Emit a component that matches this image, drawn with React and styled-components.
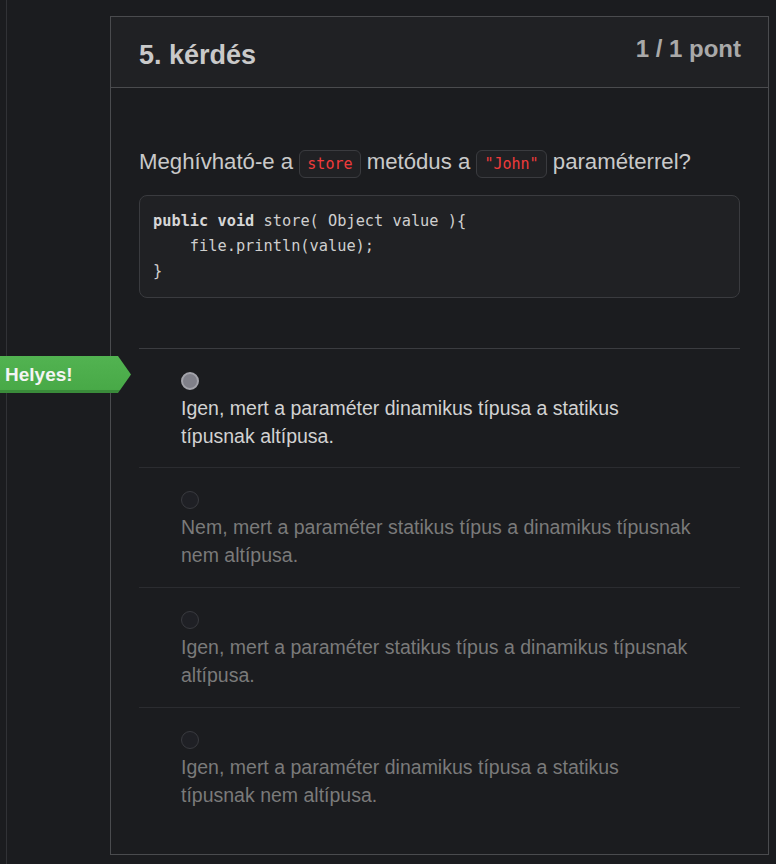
import React from "react";
import styled, { createGlobalStyle } from "styled-components";

const colors = {
  page: "#1b1c1f",
  header: "#202124",
  cardBorder: "#4a4b4e",
  divider: "#3b3c40",
  rowLine: "#2b2c30",
  text: "#c9c9c9",
  muted: "#7a7a7a",
  red: "#ef3b3b",
  green: "#4fb04e",
};

const GlobalStyle = createGlobalStyle`
  html, body {
    margin: 0;
    padding: 0;
    background: ${colors.page};
    font-family: "Liberation Sans", Arial, sans-serif;
  }
`;

const Page = styled.div`
  display: flex;
  min-height: 100vh;
`;

const Rail = styled.div`
  width: 6px;
  flex-shrink: 0;
  border-right: 1px solid #313236;
`;

const Main = styled.main`
  flex: 1;
  padding: 16px 7px 9px 103px;
`;

const Card = styled.section`
  border: 1px solid ${colors.cardBorder};
  background: ${colors.page};
`;

const Header = styled.header`
  display: flex;
  justify-content: space-between;
  align-items: flex-start;
  height: 70px;
  padding: 0 27px 0 28px;
  background: ${colors.header};
  border-bottom: 1px solid ${colors.cardBorder};
`;

const Title = styled.h2`
  margin: 23px 0 0;
  font-size: 27px;
  font-weight: 700;
  color: ${colors.text};
`;

const Points = styled.div`
  margin-top: 18px;
  font-size: 24px;
  font-weight: 700;
  color: #a9a9a9;
`;

const Body = styled.div`
  padding: 57px 28px 27px;
`;

const Question = styled.p`
  margin: 0;
  font-size: 22.2px;
  line-height: 33px;
  color: ${colors.text};
`;

const Chip = styled.code`
  font-family: "DejaVu Sans Mono", "Liberation Mono", monospace;
  font-size: 15px;
  line-height: 17px;
  padding: 4px 7px;
  color: ${colors.red};
  background: #202124;
  border: 1px solid #3a3b3f;
  border-radius: 6px;
`;

const CodeBlock = styled.pre`
  margin: 17px 0 0;
  padding: 13px;
  background: #202124;
  border: 1px solid #3a3b3f;
  border-radius: 8px;
  font-family: "DejaVu Sans Mono", "Liberation Mono", monospace;
  font-size: 15.3px;
  line-height: 25px;
  color: #cfcfcf;
`;

const Keyword = styled.b`
  font-weight: 700;
  color: #d6d6d6;
`;

const OptionList = styled.ul`
  list-style: none;
  margin: 50px 0 0;
  padding: 0;
  border-top: 1px solid ${colors.divider};
`;

const Option = styled.li`
  position: relative;
  padding: 23px 46px 18px 42px;
  &:first-child {
    padding-bottom: 17px;
  }
  & + & {
    border-top: 1px solid ${colors.rowLine};
  }
`;

const Radio = styled.span`
  display: block;
  box-sizing: border-box;
  width: 18px;
  height: 18px;
  border-radius: 50%;
  margin-bottom: 4px;
  background: ${({ $checked }) => ($checked ? "#808089" : "#1f2025")};
  border: ${({ $checked }) =>
    $checked ? "2px solid #a3a3aa" : "1px solid #393a3f"};
`;

const OptionText = styled.div`
  font-size: 19.5px;
  line-height: 28px;
  color: ${({ $checked }) => ($checked ? "#d2d2d2" : colors.muted)};
`;

const Badge = styled.div`
  position: absolute;
  top: 7px;
  left: -139px;
  width: 131px;
  height: 37px;
  box-sizing: border-box;
  padding-left: 5px;
  display: flex;
  align-items: center;
  font-size: 19px;
  font-weight: 700;
  color: #f4f4f4;
  background: linear-gradient(
    to bottom,
    #52b351 0,
    #48a947 calc(100% - 3px),
    #3a8b3a calc(100% - 3px)
  );
  clip-path: polygon(0 0, calc(100% - 13px) 0, 100% 50%, calc(100% - 13px) 100%, 0 100%);
`;

const options = [
  {
    text: "Igen, mert a paraméter dinamikus típusa a statikus típusnak altípusa.",
    checked: true,
    correct: true,
  },
  {
    text: "Nem, mert a paraméter statikus típus a dinamikus típusnak nem altípusa.",
  },
  {
    text: "Igen, mert a paraméter statikus típus a dinamikus típusnak altípusa.",
  },
  {
    text: "Igen, mert a paraméter dinamikus típusa a statikus típusnak nem altípusa.",
  },
];

export default function App() {
  return (
    <Page>
      <GlobalStyle />
      <Rail />
      <Main>
        <Card>
          <Header>
            <Title>5. kérdés</Title>
            <Points>1 / 1 pont</Points>
          </Header>
          <Body>
            <Question>
              Meghívható-e a <Chip>store</Chip> metódus a{" "}
              <Chip>"John"</Chip> paraméterrel?
            </Question>
            <CodeBlock>
              <Keyword>public</Keyword> <Keyword>void</Keyword> store( Object value ){"{"}
              {"\n"}    file.println(value);
              {"\n"}
              {"}"}
            </CodeBlock>
            <OptionList>
              {options.map((o, i) => (
                <Option key={i}>
                  {o.correct && <Badge>Helyes!</Badge>}
                  <Radio $checked={o.checked} />
                  <OptionText $checked={o.checked}>{o.text}</OptionText>
                </Option>
              ))}
            </OptionList>
          </Body>
        </Card>
      </Main>
    </Page>
  );
}
